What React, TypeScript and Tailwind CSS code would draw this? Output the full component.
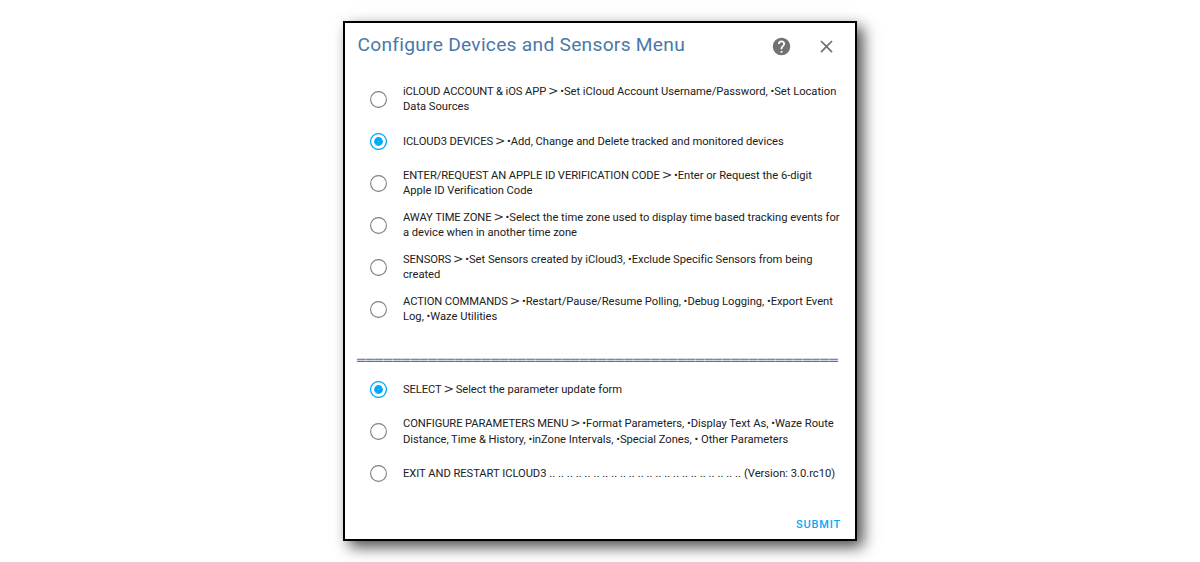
import type { ReactNode } from "react";

function Arrow() {
  return (
    <span className="ml-[-1.1px] mr-[-1.4px] inline-block h-[11px] w-[11px] text-center font-['DejaVu_Sans'] text-[12.5px] font-normal leading-[11px] tracking-normal text-[#333333]">
      &gt;
    </span>
  );
}

function Name({ children }: { children: ReactNode }) {
  return <span className="tracking-[-0.1px]">{children}</span>;
}

function Radio({ checked }: { checked?: boolean }) {
  return (
    <svg className="size-[17px] shrink-0" viewBox="0 0 17 17" fill="none">
      <circle cx="8.5" cy="8.5" r="7.9" stroke={checked ? "#03a9f4" : "#808080"} strokeWidth={checked ? 1.3 : 1.1} />
      {checked && <circle cx="8.5" cy="8.5" r="4.4" fill="#03a9f4" />}
      {checked && <circle cx="8.5" cy="8.5" r="0.6" fill="#6cccf8" />}
    </svg>
  );
}

function Option({
  checked,
  textClass = "leading-[15px]",
  children,
}: {
  checked?: boolean;
  textClass?: string;
  children: ReactNode;
}) {
  return (
    <label className="flex h-[42px] items-center gap-4 pl-[25px] pt-px">
      <Radio checked={checked} />
      <span className={`whitespace-nowrap text-[11.2px] tracking-[-0.02px] text-[#212121] ${textClass}`}>
        {children}
      </span>
    </label>
  );
}

const TWO_LINES = "-mt-0.5 leading-[15px]";
const DOTS = Array(22).fill("..").join(" ");
const RULE = "═".repeat(54);

export default function App() {
  return (
    <div className="flex h-[562px] w-[1200px] items-start justify-center overflow-hidden bg-white pt-[21px] font-['Roboto',sans-serif]">
      <div className="flex h-[520px] w-[514px] flex-col border-2 border-black bg-white shadow-[6px_6px_14px_rgba(0,0,0,0.7)]">
        <header className="flex h-[55px] items-start pl-[12.5px] pt-[7px]">
          <h1 className="w-[413px] whitespace-nowrap text-[19.2px] leading-[30px] tracking-[0.27px] text-[#4a78a8]">
            Configure Devices and Sensors Menu
          </h1>
          <svg className="mt-[6px] size-[21px]" viewBox="0 0 24 24" fill="#727272">
            <path d="M15.07 11.25l-.9.92C13.45 12.89 13 13.5 13 15h-2v-.5c0-1.11.45-2.11 1.17-2.83l1.24-1.26c.37-.36.59-.86.59-1.41a2 2 0 0 0-2-2 2 2 0 0 0-2 2H8a4 4 0 0 1 4-4 4 4 0 0 1 4 4c0 .88-.36 1.67-.93 2.25M13 19h-2v-2h2M12 2A10 10 0 0 0 2 12a10 10 0 0 0 10 10 10 10 0 0 0 10-10c0-5.53-4.5-10-10-10z" />
          </svg>
          <svg className="ml-[24px] mt-[6px] size-[21px]" viewBox="0 0 24 24" fill="#727272">
            <path d="M19 6.41L17.59 5 12 10.59 6.41 5 5 6.41 10.59 12 5 17.59 6.41 19 12 13.41 17.59 19 19 17.59 13.41 12z" />
          </svg>
        </header>
        <div className="flex flex-col">
          <Option textClass={TWO_LINES}>
            <Name>iCLOUD ACCOUNT &amp; iOS APP</Name> <Arrow /> •Set iCloud Account Username/Password, •Set Location
            <br />
            Data Sources
          </Option>
          <Option checked>
            <Name>ICLOUD3 DEVICES</Name> <Arrow /> •Add, Change and Delete tracked and monitored devices
          </Option>
          <Option textClass={TWO_LINES}>
            <span className="tracking-[-0.08px]">ENTER/REQUEST AN APPLE ID VERIFICATION CODE</span> <Arrow /> •Enter or Request the 6-digit
            <br />
            Apple ID Verification Code
          </Option>
          <Option textClass={TWO_LINES}>
            <Name>AWAY TIME ZONE</Name> <Arrow /> •Select the time zone used to display time based tracking events for
            <br />a device when in another time zone
          </Option>
          <Option textClass={TWO_LINES}>
            <Name>SENSORS</Name> <Arrow /> •Set Sensors created by iCloud3, •Exclude Specific Sensors from being
            <br />
            created
          </Option>
          <Option textClass={TWO_LINES}>
            <Name>ACTION COMMANDS</Name> <Arrow /> •Restart/Pause/Resume Polling, •Debug Logging, •Export Event
            <br />
            Log, •Waze Utilities
          </Option>
        </div>
        <div className="mt-[18px] h-[20px] pl-[12px] pt-[2px] font-['DejaVu_Sans_Mono',monospace] text-[14px] leading-[20px] tracking-[0.48px] text-[#4a74a0]">
          {RULE}
        </div>
        <div className="flex flex-col">
          <Option checked>
            <Name>SELECT</Name> <Arrow /> Select the parameter update form
          </Option>
          <Option textClass="mt-px leading-[16px]">
            <Name>CONFIGURE PARAMETERS MENU</Name> <Arrow /> •Format Parameters, •Display Text As, •Waze Route
            <br />
            Distance, Time &amp; History, •inZone Intervals, •Special Zones, • Other Parameters
          </Option>
          <Option>
            <span className="tracking-[-0.05px]">EXIT AND RESTART ICLOUD3</span>{" "}
            <span className="tracking-[0.06px]">{DOTS}</span>{" "}
            <span className="tracking-[-0.02px]">(Version: 3.0.rc10)</span>
          </Option>
        </div>
        <button className="ml-auto mr-[14px] mt-[23px] text-[11px] font-medium leading-[16px] tracking-[0.8px] text-[#03a9f4]">
          SUBMIT
        </button>
      </div>
    </div>
  );
}
